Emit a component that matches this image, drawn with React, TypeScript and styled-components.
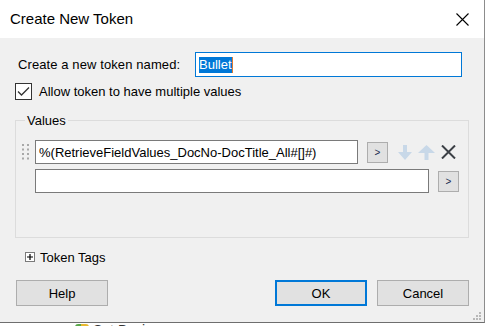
import React from 'react';
import styled, { createGlobalStyle } from 'styled-components';

const GlobalStyle = createGlobalStyle`
  html, body {
    margin: 0;
    padding: 0;
    background: #ffffff;
  }
  body {
    font-family: "Liberation Sans", Arial, sans-serif;
    font-size: 13px;
    color: #000;
  }
`;

const Page = styled.div`
  width: 488px;
  height: 326px;
  overflow: hidden;
  display: flex;
  flex-direction: column;
`;

const Window = styled.div`
  position: relative;
  width: 484px;
  height: 322px;
  border-right: 1px solid #8c8c8c;
  border-bottom: 1px solid #6e6e6e;
  display: flex;
  flex-direction: column;
  flex-shrink: 0;
`;

const TitleBar = styled.div`
  height: 38px;
  background: #fff;
  display: flex;
  align-items: center;
  justify-content: space-between;
  padding: 0 15px 0 10px;
  flex-shrink: 0;
`;

const Title = styled.div`
  font-size: 15px;
  margin-top: -1px;
`;

const Body = styled.div`
  flex: 1;
  background: #f0f0f0;
  padding: 14px 15px 0 15px;
  display: flex;
  flex-direction: column;
`;

const NameRow = styled.div`
  display: flex;
  align-items: center;
  height: 25px;
`;

const Label = styled.span`
  margin-left: 3px;
  width: 177px;
  letter-spacing: 0.1px;
`;

const TextBox = styled.div<{ $focused?: boolean; $width: number; $height: number }>`
  box-sizing: border-box;
  width: ${p => p.$width}px;
  height: ${p => p.$height}px;
  background: #fff;
  border: 1px solid ${p => (p.$focused ? '#0078d7' : '#7a7a7a')};
  display: flex;
  align-items: center;
  padding-left: 3px;
  white-space: nowrap;
  overflow: hidden;
`;

const Selected = styled.span`
  background: #0078d7;
  color: #fff;
  line-height: 16px;
  border-right: 1px solid #e07a30;
`;

const CheckRow = styled.label`
  display: flex;
  align-items: center;
  gap: 7px;
  height: 17px;
  margin-top: 6px;
`;

const CheckBox = styled.span`
  box-sizing: border-box;
  width: 17px;
  height: 17px;
  border: 1px solid #333;
  background: #fff;
  display: flex;
  align-items: center;
  justify-content: center;
`;

const Group = styled.fieldset`
  margin: 13px 0 0 0;
  padding: 12px 0 44px 6px;
  border: 1px solid #dcdcdc;
  min-width: 0;
  display: flex;
  flex-direction: column;
  gap: 5px;
`;

const Legend = styled.legend`
  margin-left: 3px;
  padding: 0 2px;
  line-height: 15px;
`;

const ValueRow = styled.div`
  display: flex;
  align-items: center;
  height: 24px;
`;

const GripSlot = styled.div`
  width: 8px;
  margin-right: 5px;
  display: flex;
  align-items: center;
`;

const SmallButton = styled.div<{ $gap: number }>`
  box-sizing: border-box;
  width: 21px;
  height: 21px;
  margin-left: ${p => p.$gap}px;
  background: #e1e1e1;
  border: 1px solid #adadad;
  display: flex;
  align-items: center;
  justify-content: center;
  font-size: 10px;
  color: #1a2a50;
`;

const IconSlot = styled.div<{ $gap: number }>`
  margin-left: ${p => p.$gap}px;
  display: flex;
  align-items: center;
`;

const TagsRow = styled.div`
  display: flex;
  align-items: center;
  gap: 5px;
  margin: 12px 0 0 10px;
  height: 14px;
`;

const PlusBox = styled.span`
  box-sizing: border-box;
  width: 10px;
  height: 10px;
  border: 1px solid #7a7a7a;
  background: #fff;
  display: flex;
  align-items: center;
  justify-content: center;
`;

const ButtonRow = styled.div`
  display: flex;
  margin-top: 16px;
  padding-left: 1px;
  gap: 10px;
`;

const Spacer = styled.div`
  flex: 1;
`;

const DialogButton = styled.div<{ $default?: boolean }>`
  box-sizing: border-box;
  width: 92px;
  height: 26px;
  background: #e1e1e1;
  border: ${p => (p.$default ? '2px solid #0078d7' : '1px solid #adadad')};
  display: flex;
  align-items: center;
  justify-content: center;
  font-size: 13px;
`;

const SizeGrip = styled.svg`
  position: absolute;
  right: 3px;
  bottom: 2px;
`;

const Beneath = styled.div`
  height: 3px;
  overflow: hidden;
  display: flex;
  align-items: flex-start;
  padding-left: 75px;
  gap: 4px;
  font-size: 14px;
  line-height: 14px;
  color: #333;
`;

const BeneathIcon = styled.span`
  width: 14px;
  height: 14px;
  border-radius: 3px;
  background: linear-gradient(90deg, #5aa84a 0 40%, #e8b830 40% 100%);
  margin-top: 1px;
`;

const CloseIcon = () => (
  <svg width="13" height="13" viewBox="0 0 13 13">
    <path d="M0.5 0.5 L12.5 12.5 M12.5 0.5 L0.5 12.5" stroke="#000" strokeWidth="1.1" />
  </svg>
);

const CheckMark = () => (
  <svg width="13" height="11" viewBox="0 0 13 11">
    <path d="M1 5.5 L4.5 9 L12 1.5" fill="none" stroke="#333" strokeWidth="1.3" />
  </svg>
);

const Grip = () => (
  <svg width="8" height="18" viewBox="0 0 8 18">
    {[0, 1, 2, 3].map(r =>
      [0, 1].map(c => (
        <rect key={`${r}-${c}`} x={c * 5} y={1 + r * 4.5} width="2" height="2" fill="#a8a8a8" />
      ))
    )}
  </svg>
);

const ArrowDown = () => (
  <svg width="14" height="15" viewBox="0 0 14 15">
    <path d="M5 0 H9 V7 H14 L7 15 L0 7 H5 Z" fill="#c8d8e8" />
  </svg>
);

const ArrowUp = () => (
  <svg width="17" height="15" viewBox="0 0 17 15">
    <path d="M6.5 15 H10.5 V8 H17 L8.5 0 L0 8 H6.5 Z" fill="#c8d8e8" />
  </svg>
);

const RemoveIcon = () => (
  <svg width="15" height="14" viewBox="0 0 15 14">
    <path d="M1 0.5 L14 13.5 M14 0.5 L1 13.5" stroke="#3c4046" strokeWidth="2" />
  </svg>
);

const PlusMark = () => (
  <svg width="6" height="6" viewBox="0 0 6 6">
    <path d="M0 3 H6 M3 0 V6" stroke="#000" strokeWidth="1.2" />
  </svg>
);

const values = ['%(RetrieveFieldValues_DocNo-DocTitle_All#[]#)', ''];

const App: React.FC = () => {
  return (
    <Page>
      <GlobalStyle />
      <Window>
        <TitleBar>
          <Title>Create New Token</Title>
          <CloseIcon />
        </TitleBar>
        <Body>
          <NameRow>
            <Label>Create a new token named:</Label>
            <TextBox $focused $width={267} $height={25}>
              <Selected>Bullet</Selected>
            </TextBox>
          </NameRow>
          <CheckRow>
            <CheckBox>
              <CheckMark />
            </CheckBox>
            Allow token to have multiple values
          </CheckRow>
          <Group>
            <Legend>Values</Legend>
            {values.map((v, i) => (
              <ValueRow key={i}>
                <GripSlot>{i === 0 && <Grip />}</GripSlot>
                <TextBox $width={i === 0 ? 323 : 394} $height={24}>
                  {v}
                </TextBox>
                <SmallButton $gap={9}>&gt;</SmallButton>
                {i === 0 && (
                  <>
                    <IconSlot $gap={10}>
                      <ArrowDown />
                    </IconSlot>
                    <IconSlot $gap={6}>
                      <ArrowUp />
                    </IconSlot>
                    <IconSlot $gap={6}>
                      <RemoveIcon />
                    </IconSlot>
                  </>
                )}
              </ValueRow>
            ))}
          </Group>
          <TagsRow>
            <PlusBox>
              <PlusMark />
            </PlusBox>
            Token Tags
          </TagsRow>
          <ButtonRow>
            <DialogButton>Help</DialogButton>
            <Spacer />
            <DialogButton $default>OK</DialogButton>
            <DialogButton>Cancel</DialogButton>
          </ButtonRow>
        </Body>
        <SizeGrip width="9" height="9" viewBox="0 0 9 9">
          {[
            [7, 1],
            [4, 4],
            [7, 4],
            [1, 7],
            [4, 7],
            [7, 7],
          ].map(([x, y]) => (
            <rect key={`${x}-${y}`} x={x} y={y} width="2" height="2" fill="#b8b8b8" />
          ))}
        </SizeGrip>
      </Window>
      <Beneath>
        <BeneathIcon />
        Set Business
      </Beneath>
    </Page>
  );
};

export default App;
